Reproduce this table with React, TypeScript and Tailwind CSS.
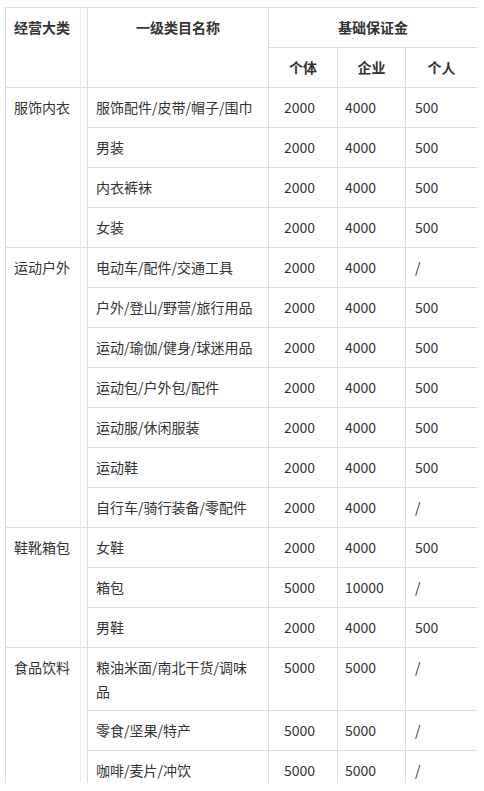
import React from "react";

type Row = { name: React.ReactNode; a: string; b: string; c: string };
type Group = { category: string; rows: Row[] };

const groups: Group[] = [
  {
    category: "服饰内衣",
    rows: [
      { name: "服饰配件/皮带/帽子/围巾", a: "2000", b: "4000", c: "500" },
      { name: "男装", a: "2000", b: "4000", c: "500" },
      { name: "内衣裤袜", a: "2000", b: "4000", c: "500" },
      { name: "女装", a: "2000", b: "4000", c: "500" },
    ],
  },
  {
    category: "运动户外",
    rows: [
      { name: "电动车/配件/交通工具", a: "2000", b: "4000", c: "/" },
      { name: "户外/登山/野营/旅行用品", a: "2000", b: "4000", c: "500" },
      { name: "运动/瑜伽/健身/球迷用品", a: "2000", b: "4000", c: "500" },
      { name: "运动包/户外包/配件", a: "2000", b: "4000", c: "500" },
      { name: "运动服/休闲服装", a: "2000", b: "4000", c: "500" },
      { name: "运动鞋", a: "2000", b: "4000", c: "500" },
      { name: "自行车/骑行装备/零配件", a: "2000", b: "4000", c: "/" },
    ],
  },
  {
    category: "鞋靴箱包",
    rows: [
      { name: "女鞋", a: "2000", b: "4000", c: "500" },
      { name: "箱包", a: "5000", b: "10000", c: "/" },
      { name: "男鞋", a: "2000", b: "4000", c: "500" },
    ],
  },
  {
    category: "食品饮料",
    rows: [
      {
        name: (
          <>
            粮油米面/南北干货/调味
            <br />品
          </>
        ),
        a: "5000",
        b: "5000",
        c: "/",
      },
      { name: "零食/坚果/特产", a: "5000", b: "5000", c: "/" },
      { name: "咖啡/麦片/冲饮", a: "5000", b: "5000", c: "/" },
    ],
  },
];

const cell = "border border-[#dcdcdc] pt-[7px] pb-[7px] align-top leading-6";

export default function App() {
  return (
    <div className="bg-white pl-[5px] pt-[7px] pr-[7px]">
      <div className="h-[776px] overflow-hidden">
        <table
          className="w-[472px] table-fixed border-collapse text-[14px] text-[#333]"
          style={{ fontFamily: '"Noto Sans CJK SC", "Noto Sans", sans-serif' }}
        >
          <colgroup>
            <col className="w-[82px]" />
            <col className="w-[181px]" />
            <col className="w-[69px]" />
            <col className="w-[68px]" />
            <col className="w-[72px]" />
          </colgroup>
          <thead>
            <tr className="h-10">
              <th rowSpan={2} className={`${cell} px-2 text-left font-bold shadow-[inset_-6px_0_0_#fff,inset_-7px_0_0_#f0f0f0]`}>
                经营大类
              </th>
              <th rowSpan={2} className={`${cell} px-2 text-center font-bold`}>
                一级类目名称
              </th>
              <th colSpan={3} className={`${cell} px-2 text-center font-bold`}>
                基础保证金
              </th>
            </tr>
            <tr className="h-10">
              <th className={`${cell} text-center font-bold`}>个体</th>
              <th className={`${cell} text-center font-bold`}>企业</th>
              <th className={`${cell} text-center font-bold`}>个人</th>
            </tr>
          </thead>
          <tbody>
            {groups.map((g) =>
              g.rows.map((r, i) => (
                <tr key={g.category + i} className="h-10">
                  {i === 0 && (
                    <td
                      rowSpan={g.rows.length}
                      className={`${cell} px-2 shadow-[inset_-6px_0_0_#fff,inset_-7px_0_0_#f0f0f0]`}
                    >
                      {g.category}
                    </td>
                  )}
                  <td className={`${cell} px-2`}>{r.name}</td>
                  <td className={`${cell} pl-[15px]`}>{r.a}</td>
                  <td className={`${cell} pl-[7px]`}>{r.b}</td>
                  <td className={`${cell} pl-[9px]`}>{r.c}</td>
                </tr>
              ))
            )}
          </tbody>
        </table>
      </div>
    </div>
  );
}
